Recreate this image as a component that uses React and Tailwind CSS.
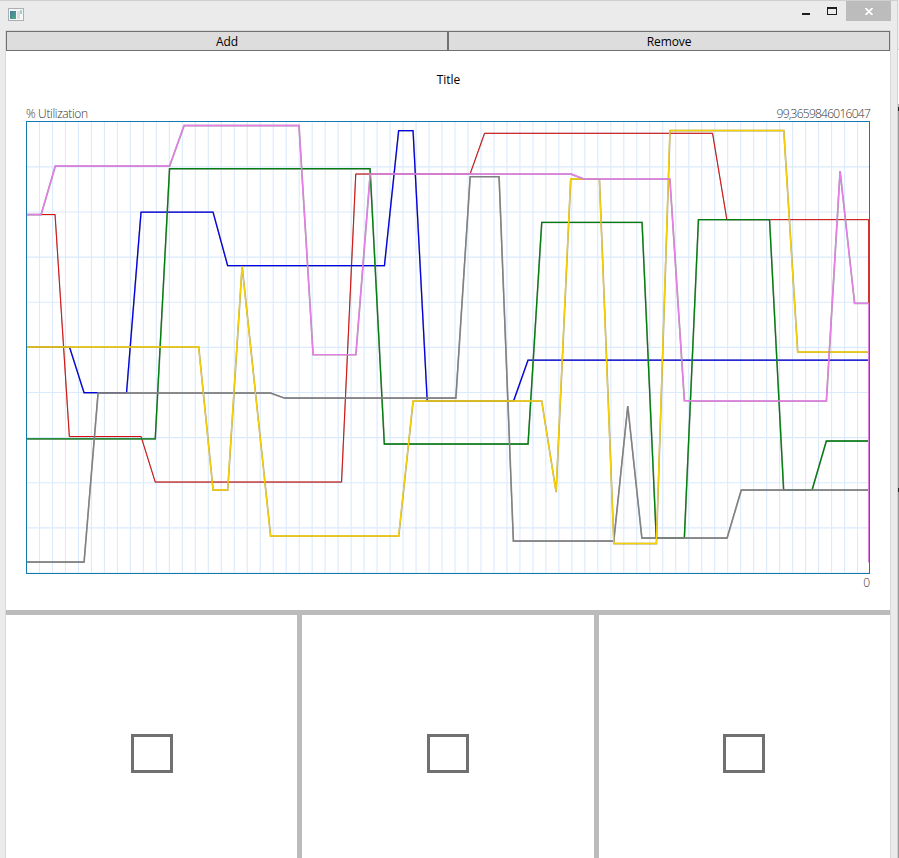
const series = [
  { color: "#e00000", width: 0.9, points: "26.5,214.5 55,214.5 69.3,436.5 141,436.5 155.2,482 341.5,482 355.7,174 470,174 484.5,133.3 712.5,133.3 726.8,219.6 868.7,219.6 868.7,562" },
  { color: "#0000e6", width: 1.25, points: "26.5,347 69.5,347 84,392.7 126.5,392.7 141,212 213,212 227.6,265.6 384.4,265.6 398.6,130.5 413,130.5 427.2,401 513.5,401 528,360 868.7,360" },
  { color: "#007f0e", width: 1.3, points: "26.5,438.8 155.2,438.8 169.5,168.7 370,168.7 384.3,444 528,444 541.7,222.3 642,222.3 656.2,538 684.3,538 698.4,219.6 769.5,219.6 783.6,490 812,490 826.3,441 868.7,441" },
  { color: "#808080", width: 1.3, points: "26.5,562 84,562 98,393 270.5,393 284.5,398 455.8,398 470.1,176.6 499,176.6 513.3,541 613.7,541 627.7,406 641.8,538 727,538 741.2,490 868.7,490" },
  { color: "#f7d000", width: 1.3, points: "26.5,347 198.6,347 213,490 227.6,490 242,266 270.5,536 398.6,536 413,401 541.6,401 556,492 570.6,179 599.3,179 613.8,543.5 656.3,543.5 669.9,130.5 783.7,130.5 797.6,352 868.7,352" },
  { color: "#e77de7", width: 1.35, points: "26.5,214.5 41,214.5 55.2,166 169.5,166 184,125.5 298.9,125.5 313,354.6 355.8,354.6 370.1,174 571,174 584,179 669.8,179 684.3,400.5 698,401 826.3,401 840,171 854.5,303.3 868.7,303.3 868.7,562" },
];

const verticals = Array.from({ length: 64 }, (_, i) => 26.5 + (i + 1) * 12.985);
const horizontals = Array.from({ length: 10 }, (_, i) => 121.8 + (i + 1) * 45.12);

function AppIcon() {
  return (
    <svg width="16" height="14" viewBox="0 0 16 14" shapeRendering="crispEdges">
      <defs>
        <linearGradient id="screen" x1="0" y1="0" x2="1" y2="1">
          <stop offset="0" stopColor="#4179a5" />
          <stop offset="1" stopColor="#4fae7b" />
        </linearGradient>
      </defs>
      <rect x=".5" y=".5" width="15" height="12" fill="#f7f7f7" stroke="#a9b0b5" />
      <rect x="2" y="3" width="6" height="8" fill="url(#screen)" />
      <rect x="9" y="3" width="3" height="8" fill="#dedede" />
      <rect x="12" y="2" width="2" height="4" fill="#a9cfc9" />
    </svg>
  );
}

function TitleBar() {
  return (
    <header className="flex h-[30px] shrink-0 items-start justify-between border-t border-[#d0d0d0] bg-[#ebebeb]">
      <div className="pl-2 pt-[7px]"><AppIcon /></div>
      <div className="flex pr-1.5">
        <button className="flex h-5 w-[26px] justify-center pt-3"><span className="h-0.5 w-2 bg-[#1e1e1e]" /></button>
        <button className="flex h-5 w-[26px] justify-center pt-1.5"><span className="h-2 w-2.5 border border-t-2 border-[#1e1e1e]" /></button>
        <button className="ml-px flex h-5 w-[45px] items-center justify-center bg-[#bcbcbc]">
          <svg width="8" height="7" viewBox="0 0 8 7" className="mt-px"><path d="M.5 0 7.5 7M7.5 0 .5 7" stroke="#fff" strokeWidth="1.7" /></svg>
        </button>
      </div>
    </header>
  );
}

function Chart() {
  return (
    <svg width="844" height="453" viewBox="26 121 844 453" className="block shrink-0">
      <g stroke="#dbeafc" strokeWidth="1.1">
        {verticals.map((x) => <line key={x} x1={x} x2={x} y1="122" y2="573" />)}
        {horizontals.map((y) => <line key={y} x1="27" x2="869" y1={y} y2={y} />)}
      </g>
      <rect x="26.5" y="121.5" width="843" height="452" fill="none" stroke="#127ab0" />
      {series.map(({ color, width, points }) => (
        <g key={color} fill="none">
          <polyline points={points} stroke="#808080" strokeWidth={width + 0.3} strokeOpacity=".75" transform="translate(.15 .15)" />
          <polyline points={points} stroke={color} strokeWidth={width} />
        </g>
      ))}
      <path d="M26.5 122V573M869.5 122V573" stroke="#127ab0" />
    </svg>
  );
}

export default function App() {
  return (
    <div className="flex h-[858px] w-[899px] overflow-hidden bg-[#ebebeb] font-['Open_Sans','Noto_Sans',sans-serif] text-xs text-black">
      <div className="flex w-[897px] shrink-0 flex-col">
        <TitleBar />
        <div className="ml-[5px] flex h-[862px] w-[886px] shrink-0 flex-col border-x border-t border-[#d9d9d9] bg-white">
          <div className="grid h-5 shrink-0 grid-cols-2">
            <button className="flex items-center justify-center border border-[#707070] bg-[#ddd] pt-0.5 leading-4 tracking-[-0.1px]">Add</button>
            <button className="flex items-center justify-center border border-[#707070] bg-[#ddd] pt-0.5 leading-4 tracking-[-0.1px]">Remove</button>
          </div>
          <section className="flex h-[559px] shrink-0 flex-col px-5">
            <h1 className="pl-px pt-[21px] text-center leading-4">Title</h1>
            <div className="mt-[18px] flex h-[15px] justify-between font-light leading-4 text-[#333]">
              <span className="tracking-[-0.35px]">% Utilization</span>
              <span className="tracking-[-0.74px]">99,3659846016047</span>
            </div>
            <Chart />
            <div className="text-right font-light leading-[18px] text-[#333]">0</div>
          </section>
          <div className="h-[5px] shrink-0 bg-[#bbb]" />
          <div className="grid h-[277px] shrink-0 grid-cols-3 gap-[5px] bg-[#bbb]">
            {[0, 1, 2].map((i) => (
              <div key={i} className="flex items-center justify-center bg-white">
                <div className="h-[39px] w-[42px] border-[3px] border-[#707070]" />
              </div>
            ))}
          </div>
        </div>
      </div>
      <div className="w-px bg-[#d2d2d2]" />
      <div className="flex w-px flex-col bg-[#9a9a9a]">
        <div className="h-[49px] bg-[#f0f0f0]" />
        <div className="h-px bg-[#d0d0d0]" />
        <div className="h-[54px] bg-white" />
        <div className="h-[3px] bg-[#b0b0b0]" />
        <div className="h-1 bg-[#222]" />
        <div className="h-[377px]" />
        <div className="h-1 bg-[#222]" />
      </div>
    </div>
  );
}
